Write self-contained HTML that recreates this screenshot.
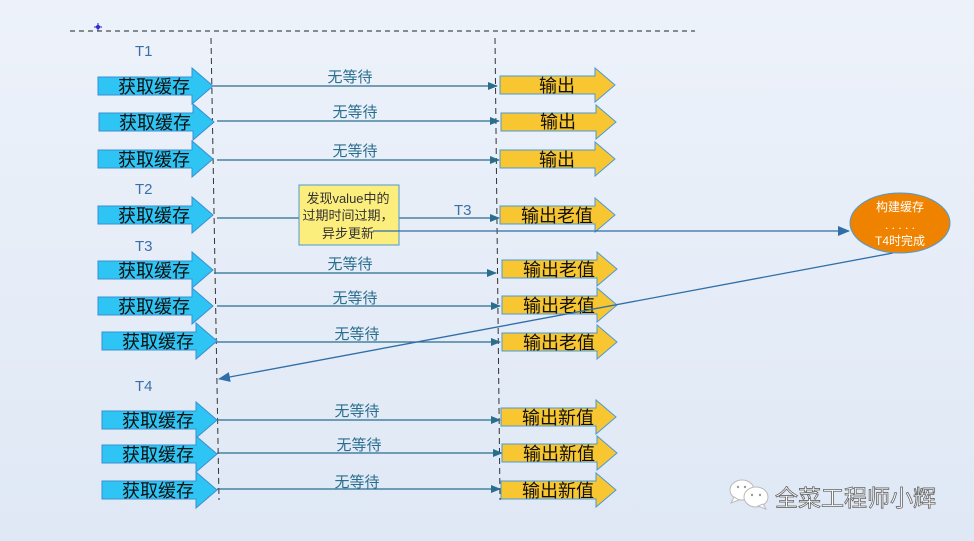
<!DOCTYPE html>
<html><head><meta charset="utf-8"><style>
html,body{margin:0;padding:0;}
body{width:974px;height:541px;overflow:hidden;background:linear-gradient(#edf2fa,#dfe8f5);}
svg{display:block;font-family:"Liberation Sans","Noto Sans CJK SC",sans-serif;}
</style></head><body>
<svg width="974" height="541" viewBox="0 0 974 541">
<defs>
<marker id="ah" markerWidth="10" markerHeight="8" refX="9" refY="4" orient="auto" markerUnits="userSpaceOnUse"><path d="M0,0 L10,4 L0,8 Z" fill="#2a6e8e"/></marker>
<marker id="ah2" markerWidth="12" markerHeight="10" refX="11" refY="5" orient="auto" markerUnits="userSpaceOnUse"><path d="M0,0 L12,5 L0,10 Z" fill="#2f6ea8"/></marker>
<g id="blue"><polygon points="0,-9 94,-9 94,-18 115,0 94,18 94,9 0,9" fill="#2ec4f4" stroke="#3a8fd0" stroke-width="1"/><text x="56" y="7" font-size="18" text-anchor="middle" fill="#111">获取缓存</text></g>
<polygon id="or" points="0,-9 95,-9 95,-17 115,0 95,17 95,9 0,9" fill="#f8c631" stroke="#4a9ad8" stroke-width="1"/>
</defs>
<line x1="70" y1="31" x2="695" y2="31" stroke="#222" stroke-dasharray="5,4"/>
<path d="M98,23 v8 M94,27 h8" stroke="#22c" stroke-width="1"/><circle cx="98" cy="27" r="1.5" fill="none" stroke="#22c"/>
<line x1="211" y1="38" x2="219" y2="500" stroke="#333" stroke-dasharray="6,4"/>
<line x1="495" y1="38" x2="500" y2="500" stroke="#333" stroke-dasharray="6,4"/>
<g font-size="15" fill="#3b6fa8">
<text x="135" y="56">T1</text><text x="135" y="194">T2</text><text x="135" y="251">T3</text><text x="135" y="391">T4</text><text x="454" y="215">T3</text>
</g>
<g stroke="#2a6e8e" stroke-width="1.3" marker-end="url(#ah)">
<line x1="213" y1="86" x2="497" y2="86"/>
<line x1="217" y1="121" x2="499" y2="121"/>
<line x1="217" y1="160" x2="499" y2="160"/>
<line x1="217" y1="218" x2="499" y2="218"/>
<line x1="214" y1="273" x2="496" y2="273"/>
<line x1="217" y1="306" x2="500" y2="306"/>
<line x1="217" y1="342" x2="500" y2="342"/>
<line x1="217" y1="420" x2="500" y2="420"/>
<line x1="217" y1="453" x2="502" y2="453"/>
<line x1="217" y1="489" x2="500" y2="489"/>
</g>
<g font-size="15" fill="#2a6e8e" text-anchor="middle">
<text x="350" y="82">无等待</text><text x="355" y="117">无等待</text><text x="355" y="156">无等待</text>
<text x="350" y="269">无等待</text><text x="355" y="303">无等待</text><text x="357" y="339">无等待</text>
<text x="357" y="416">无等待</text><text x="359" y="450">无等待</text><text x="357" y="487">无等待</text>
</g>
<use href="#blue" x="98" y="86"/><use href="#blue" x="99" y="122"/><use href="#blue" x="98" y="159"/>
<use href="#blue" x="98" y="215"/><use href="#blue" x="98" y="270"/><use href="#blue" x="98" y="306"/>
<use href="#blue" x="102" y="341"/><use href="#blue" x="102" y="420"/><use href="#blue" x="102" y="454"/><use href="#blue" x="102" y="490"/>
<use href="#or" x="500" y="85"/><use href="#or" x="501" y="122"/><use href="#or" x="500" y="159"/>
<use href="#or" x="500" y="215"/><use href="#or" x="502" y="269"/><use href="#or" x="502" y="305"/><use href="#or" x="502" y="342"/>
<use href="#or" x="501" y="417"/><use href="#or" x="502" y="453"/><use href="#or" x="501" y="490"/>
<g font-size="18" fill="#111" text-anchor="middle">
<text x="557" y="92">输出</text><text x="558" y="128">输出</text><text x="557" y="166">输出</text>
<text x="557" y="222">输出老值</text><text x="559" y="276">输出老值</text><text x="559" y="312">输出老值</text><text x="559" y="349">输出老值</text>
<text x="558" y="424">输出新值</text><text x="559" y="460">输出新值</text><text x="558" y="497">输出新值</text>
</g>
<rect x="299" y="185" width="100" height="60" fill="#fcee7c" stroke="#4a9ad8" stroke-width="1"/>
<g font-size="13" fill="#333" text-anchor="middle">
<text x="348" y="203">发现value中的</text><text x="348" y="220">过期时间过期，</text><text x="348" y="238">异步更新</text>
</g>
<line x1="373" y1="231" x2="849" y2="231" stroke="#2f6ea8" stroke-width="1.3" marker-end="url(#ah2)"/>
<line x1="893" y1="253" x2="219" y2="379" stroke="#2f6ea8" stroke-width="1.3" marker-end="url(#ah2)"/>
<ellipse cx="900" cy="223" rx="50" ry="30" fill="#ef8300" stroke="#4a9ad8" stroke-width="1"/>
<g font-size="12" fill="#fff" text-anchor="middle">
<text x="900" y="211">构建缓存</text><text x="900" y="229">. . . . .</text><text x="900" y="245">T4时完成</text>
</g>
<g fill="#fff" stroke="#bbb" stroke-width="1">
<ellipse cx="742" cy="490" rx="12" ry="10"/><path d="M734,497 l-3,6 l8,-3 Z"/>
<ellipse cx="756" cy="497" rx="12" ry="10"/><path d="M763,504 l3,5 l-8,-3 Z"/>
</g>
<g fill="#999"><circle cx="738" cy="487" r="1.2"/><circle cx="745" cy="487" r="1.2"/><circle cx="752" cy="495" r="1.2"/><circle cx="760" cy="495" r="1.2"/></g>
<text x="775" y="506" font-size="23" fill="#fff" stroke="#666" stroke-width="0.8">全菜工程师小辉</text>
</svg>
</body></html>
